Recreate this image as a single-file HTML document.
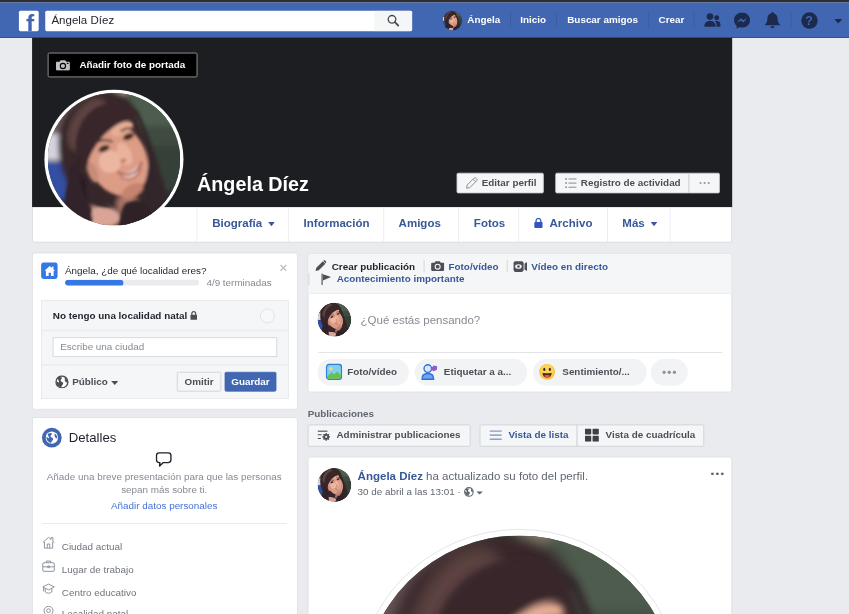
<!DOCTYPE html>
<html lang="es">
<head>
<meta charset="utf-8">
<title>Ángela Díez</title>
<style>
html,body{margin:0;padding:0;width:849px;height:614px;overflow:hidden;background:#e9ebee;}
body{font-family:"Liberation Sans",Arial,Helvetica,sans-serif;font-size:12px;color:#1d2129;line-height:16px;}
#page{position:absolute;left:0;top:0;width:1032px;height:747px;overflow:hidden;background:#e9ebee;transform:scale(0.82267);transform-origin:0 0;}
#page *{box-sizing:border-box;}
.abs{position:absolute;}
.b{font-weight:bold;}
svg{display:block;}
/* top bars */
#chrome{left:0;top:0;width:1032px;height:3.3px;background:#2d2e31;}
#bluebar{left:0;top:3.3px;width:1032px;height:43px;background:#4267b2;border-bottom:1px solid #29487d;}
#logo{left:22.5px;top:10px;width:24px;height:24.5px;background:#fff;border-radius:2px;overflow:hidden;}
#search{left:54.5px;top:10px;width:446px;height:24.5px;background:#fff;border-radius:2px;overflow:hidden;}
#search .q{left:8px;top:0;line-height:23px;font-size:14px;color:#1d2129;}
#search .btn{right:0;top:0;width:46px;height:25px;background:#f5f6f7;}
.navt{top:0;height:42px;line-height:43px;color:#fff;font-weight:bold;font-size:12px;white-space:nowrap;}
.nsep{top:12px;width:1px;height:18px;background:#3a5a9e;}
/* cover */
#cover{left:39px;top:46.3px;width:851px;height:205.7px;background:#1c1e21;}
#addcover{left:19px;top:18px;width:181.5px;height:29.5px;border:1px solid #a8a9ab;background:#000;border-radius:2px;color:#fff;font-weight:bold;font-size:12px;line-height:27.5px;}
#pp{left:15px;top:62.5px;width:169px;height:169px;border-radius:50%;background:#fff;z-index:5;}
#pp svg{position:absolute;left:4px;top:4px;}
#name{left:200.5px;top:163px;font-size:24px;line-height:30px;font-weight:bold;color:#fff;white-space:nowrap;}
.cbtn{height:25px;background:#f5f6f7;border:1px solid #ccd0d5;border-radius:2px;color:#4b4f56;font-weight:bold;font-size:12px;line-height:23px;white-space:nowrap;}
/* tabs */
#tabs{left:39px;top:252px;width:851px;height:43px;background:#fff;border:1px solid #d3d6db;border-top:0;border-radius:0 0 3px 3px;}
.tab{top:0;height:42px;border-left:1px solid #e9eaed;color:#385898;font-size:14px;font-weight:bold;line-height:39px;padding-left:18px;white-space:nowrap;}
/* cards */
.card{background:#fff;border:1px solid #dddfe2;border-radius:3px;}
.grey{color:#858a93;}
.pill{top:436.4px;height:32.5px;border-radius:17px;background:#f2f3f5;color:#4b4f56;font-weight:bold;font-size:12px;line-height:32.5px;white-space:nowrap;}
.pill span{position:absolute;left:36px;top:0;}
.pill svg{position:absolute;left:9.5px;top:6px;}
.hl{font-weight:bold;font-size:12px;white-space:nowrap;line-height:16px;}
.drow{left:76px;color:#6f747c;font-size:12px;line-height:16px;white-space:nowrap;}
</style>
</head>
<body>
<svg width="0" height="0" style="position:absolute">
<defs>
<filter id="bl" x="-20%" y="-20%" width="140%" height="140%"><feGaussianBlur stdDeviation="2.2"/></filter>
<filter id="bl2" x="-20%" y="-20%" width="140%" height="140%"><feGaussianBlur stdDeviation="1.2"/></filter>
<clipPath id="cc"><circle cx="50" cy="50" r="50"/></clipPath>
<symbol id="photo" viewBox="0 0 100 100">
<g clip-path="url(#cc)">
<rect width="100" height="100" fill="#3f4b40"/>
<g filter="url(#bl)">
<!-- background -->
<rect x="55" y="-5" width="55" height="30" fill="#4e5b4d"/>
<rect x="72" y="40" width="40" height="38" fill="#363f37"/>
<rect x="70" y="74" width="40" height="36" fill="#2a2c34"/>
<rect x="50" y="-4" width="9" height="10" fill="#9a917f"/>
<rect x="-5" y="-5" width="40" height="40" fill="#6b5658"/>
<rect x="-6" y="31" width="16" height="20" fill="#d6d3de"/>
<rect x="-5" y="52" width="24" height="32" fill="#3350a4"/>
<rect x="-5" y="80" width="30" height="25" fill="#25336c"/>
<!-- hair mass -->
<path d="M8 38 C8 14 26 -3 48 -1 C60 0 66 8 69 20 C74 34 82 48 86 64 C90 84 82 98 66 104 L22 104 C24 92 14 82 16 70 C10 60 8 50 8 38Z" fill="#38282a"/>
<ellipse cx="30" cy="24" rx="12" ry="22" fill="#5c4341" transform="rotate(30 30 24)"/>
<ellipse cx="24" cy="70" rx="6" ry="16" fill="#291d20" transform="rotate(-8 24 70)"/>
<!-- shoulder / neck -->
<ellipse cx="38" cy="94" rx="17" ry="8" fill="#dba698"/>
<ellipse cx="60" cy="84" rx="8" ry="8" fill="#a87366"/>
</g>
<g filter="url(#bl2)">
<!-- face -->
<ellipse cx="52.500" cy="50" rx="22" ry="29" fill="#dc9c86" transform="rotate(-25 52.500 50)"/>
<ellipse cx="47" cy="52" rx="8.500" ry="8.500" fill="#ecb7a0"/>
<ellipse cx="58" cy="46" rx="5" ry="9" fill="#eab29b" transform="rotate(-25 58 46)"/>
<ellipse cx="56" cy="27" rx="9" ry="4.500" fill="#e6ad95" transform="rotate(-25 56 27)"/>
<ellipse cx="64" cy="74" rx="9" ry="5" fill="#c5836f" transform="rotate(-30 64 74)"/>
<ellipse cx="34" cy="60" rx="3.500" ry="8" fill="#c88b78" transform="rotate(-20 34 60)"/>
<!-- hair right of face -->
<path d="M60 9 C68 16 72 28 75 40 C77 52 76 62 72 72 C70 80 74 88 70 96 L90 96 C92 84 88 70 84 60 C80 46 76 30 68 14Z" fill="#33252a"/>
<path d="M58 84 C64 80 72 80 76 86 C80 92 78 100 70 104 L52 104 C56 98 54 90 58 84Z" fill="#2e2126"/>
<!-- fringe -->
<path d="M66 17 C62 4 34 2 24 26 C18 42 22 58 28 66 C29 56 31 48 35 42 C40 33 47 27 54 23 C58 21 63 19 66 17Z" fill="#38282a"/>
<!-- hair left falling -->
<path d="M27 44 C22 58 24 72 30 82 C34 88 35 92 33 100 L14 100 C10 84 14 62 27 44Z" fill="#30232a"/>
<ellipse cx="43" cy="93" rx="10" ry="5.500" fill="#d9a496" transform="rotate(12 43 93)"/>
<path d="M30 64 C32 74 40 82 50 86 C44 88 36 86 32 80 C29 75 29 70 30 64Z" fill="#35262a"/>
<!-- brows, eyes, mouth -->
<path d="M36 38 C40 35 45 35 49 37" stroke="#4a302b" stroke-width="1.500" fill="none"/>
<path d="M55 29 C59 26 63 26 67 28" stroke="#4a302b" stroke-width="1.500" fill="none"/>
<ellipse cx="42.500" cy="42" rx="4.400" ry="2.300" fill="#3a2521" transform="rotate(-22 42.500 42)"/>
<ellipse cx="61" cy="33" rx="4.400" ry="2.300" fill="#3a2521" transform="rotate(-22 61 33)"/>
<path d="M54 60.500 C60 62 67 58 70 52.500 C70 62 61 68 54 60.500Z" fill="#f6e8e2"/>
<path d="M52.500 59.500 C60 64.500 68 61 71 52" stroke="#a5524c" stroke-width="1.600" fill="none"/>
<path d="M55 63 C61 68 68 64 70.500 57" stroke="#b96a60" stroke-width="1.400" fill="none"/>
<ellipse cx="57" cy="51" rx="2.500" ry="1.200" fill="#b97662" transform="rotate(-22 57 51)"/>
</g>
</g>
</symbol>
</defs>
</svg>
<div id="page">
<div id="chrome" class="abs"></div>
<div id="bluebar" class="abs">
  <div id="logo" class="abs"><div class="abs b" style="left:9px;top:1px;font-size:30px;line-height:30px;color:#4267b2;">f</div></div>
  <div id="search" class="abs">
    <div class="q abs">Ángela Díez</div>
    <div class="btn abs"><svg class="abs" style="left:15px;top:3.5px" width="16" height="16" viewBox="0 0 16 16"><circle cx="6.5" cy="6.5" r="4.6" fill="none" stroke="#4b4f56" stroke-width="1.7"/><path d="M10 10 L14 14" stroke="#4b4f56" stroke-width="2.2" stroke-linecap="round"/></svg></div>
  </div>
  <svg class="abs" style="left:538px;top:10px;border-radius:50%" width="24" height="24"><use href="#photo" width="24" height="24"/></svg>
  <div class="navt abs" style="left:568px;">Ángela</div>
  <div class="nsep abs" style="left:620px;"></div>
  <div class="navt abs" style="left:632.5px;">Inicio</div>
  <div class="nsep abs" style="left:676px;"></div>
  <div class="navt abs" style="left:689.5px;">Buscar amigos</div>
  <div class="nsep abs" style="left:788px;"></div>
  <div class="navt abs" style="left:800.5px;">Crear</div>
  <div class="nsep abs" style="left:843px;"></div>
  <!-- friends -->
  <svg class="abs" style="left:855.5px;top:11.5px" width="20" height="20" viewBox="0 0 20 20" fill="#1c2a4d"><circle cx="7" cy="5.2" r="4"/><path d="M0 17.5 C0 12.5 3 10.5 7 10.5 C11 10.5 14 12.5 14 17.5 Z"/><circle cx="15.2" cy="6.5" r="3"/><path d="M13 10.6 C14 10.3 17.5 10 19 12 C20 13.5 20 15.5 20 17.5 L15.3 17.5 C15.3 14.5 14.6 12.3 13 10.6Z"/></svg>
  <!-- messenger -->
  <svg class="abs" style="left:892px;top:11.5px" width="20" height="20" viewBox="0 0 20 20"><path d="M10 0.3 C4.5 0.3 0.3 4.3 0.3 9.5 C0.3 12.3 1.5 14.7 3.4 16.3 L3.4 19.8 L6.7 18 C7.7 18.3 8.8 18.5 10 18.5 C15.5 18.5 19.7 14.6 19.7 9.5 C19.7 4.3 15.5 0.3 10 0.3Z" fill="#1c2a4d"/><path d="M3.8 12.3 L8.6 7.2 L11.2 9.7 L16.2 7.2 L11.4 12.3 L8.8 9.8Z" fill="#4267b2"/></svg>
  <!-- bell -->
  <svg class="abs" style="left:928.5px;top:11px" width="20" height="21" viewBox="0 0 20 21" fill="#1c2a4d"><path d="M10 0.5 C10.9 0.5 11.5 1.1 11.5 2 C14.6 2.8 16.2 5.4 16.2 8.6 C16.2 12.2 17 14 19 15.6 L19 16.6 L1 16.6 L1 15.6 C3 14 3.8 12.2 3.8 8.6 C3.8 5.4 5.4 2.8 8.5 2 C8.5 1.1 9.1 0.5 10 0.5Z"/><path d="M7.6 18 L12.4 18 C12.4 19.4 11.3 20.3 10 20.3 C8.7 20.3 7.6 19.4 7.6 18Z"/></svg>
  <div class="nsep abs" style="left:960.5px;"></div>
  <!-- help -->
  <div class="abs b" style="left:973.5px;top:11.5px;width:20px;height:20px;border-radius:50%;background:#1c2a4d;color:#4267b2;font-size:15px;line-height:20.5px;text-align:center;">?</div>
  <!-- caret -->
  <svg class="abs" style="left:1014px;top:19.5px" width="10" height="6" viewBox="0 0 10 6"><path d="M0 0 L10 0 L5 5.5Z" fill="#1c2a4d"/></svg>
</div>

<div id="cover" class="abs">
  <div id="addcover" class="abs">
    <svg class="abs" style="left:8.5px;top:7.5px" width="17" height="13" viewBox="0 0 17 13"><path d="M1.5 2 L4.5 2 L5.6 0.3 L11.4 0.3 L12.5 2 L15.5 2 C16.3 2 17 2.7 17 3.5 L17 11.3 C17 12.1 16.3 12.8 15.5 12.8 L1.5 12.8 C0.7 12.8 0 12.1 0 11.3 L0 3.5 C0 2.7 0.7 2 1.5 2Z" fill="#bfc0c1"/><circle cx="8.5" cy="7.2" r="3.9" fill="#000"/><circle cx="8.5" cy="7.2" r="2.5" fill="#bfc0c1"/><rect x="13.3" y="3.4" width="2" height="1.4" fill="#000"/></svg>
    <div class="abs" style="left:37.5px;top:1.2px;white-space:nowrap;">Añadir foto de portada</div>
  </div>
  <div id="pp" class="abs"><svg width="161" height="161"><use href="#photo" width="161" height="161"/></svg></div>
  <div id="name" class="abs">Ángela Díez</div>
  <div class="cbtn abs" style="left:516px;top:163.7px;width:106px;">
    <svg class="abs" style="left:9.5px;top:4px" width="15" height="15" viewBox="0 0 15 15"><path d="M10.2 1.6 C10.9 0.9 12 0.9 12.7 1.6 L13.4 2.3 C14.1 3 14.1 4.1 13.4 4.8 L5 13.2 L1.2 13.8 L1.8 10 Z M9 2.8 L12.2 6" fill="none" stroke="#7f848c" stroke-width="1.1" stroke-linejoin="round"/></svg>
    <div class="abs" style="left:29.5px;top:0;">Editar perfil</div>
  </div>
  <div class="cbtn abs" style="left:636px;top:163.7px;width:163px;border-radius:2px 0 0 2px;">
    <svg class="abs" style="left:10.5px;top:5px" width="14" height="13" viewBox="0 0 14 13"><g fill="#7f848c"><rect x="0" y="0.5" width="2" height="2"/><rect x="0" y="5.5" width="2" height="2"/><rect x="0" y="10.5" width="2" height="2"/><rect x="4" y="1" width="10" height="1.1"/><rect x="4" y="6" width="10" height="1.1"/><rect x="4" y="11" width="10" height="1.1"/></g></svg>
    <div class="abs" style="left:30px;top:0;">Registro de actividad</div>
  </div>
  <div class="cbtn abs" style="left:798px;top:163.7px;width:37.5px;border-radius:0 2px 2px 0;">
    <svg class="abs" style="left:11.5px;top:10px" width="13" height="3" viewBox="0 0 13 3"><g fill="#8d949e"><circle cx="1.5" cy="1.5" r="1.3"/><circle cx="6.5" cy="1.5" r="1.3"/><circle cx="11.5" cy="1.5" r="1.3"/></g></svg>
  </div>
</div>
<div id="tabs" class="abs">
  <div class="tab abs" style="left:199px;width:111.5px;">Biografía <svg style="display:inline-block;margin-left:3px;vertical-align:1px" width="8" height="5" viewBox="0 0 8 5"><path d="M0 0 L8 0 L4 5Z" fill="#385898"/></svg></div>
  <div class="tab abs" style="left:310px;width:116px;">Información</div>
  <div class="tab abs" style="left:425.5px;width:91.5px;">Amigos</div>
  <div class="tab abs" style="left:517px;width:73px;">Fotos</div>
  <div class="tab abs" style="left:590px;width:107.5px;"><svg style="display:inline-block;margin-right:8px;vertical-align:-1px" width="11" height="12" viewBox="0 0 11 12"><path d="M2.6 5 L2.6 3.4 C2.6 1.6 3.9 0.6 5.5 0.6 C7.1 0.6 8.4 1.6 8.4 3.4 L8.4 5" fill="none" stroke="#2f56c0" stroke-width="1.5"/><rect x="0.5" y="5" width="10" height="7" rx="1" fill="#2f56c0"/></svg>Archivo</div>
  <div class="tab abs" style="left:697.5px;width:76.5px;">Más <svg style="display:inline-block;margin-left:3px;vertical-align:1px" width="8" height="5" viewBox="0 0 8 5"><path d="M0 0 L8 0 L4 5Z" fill="#385898"/></svg></div>
  <div class="tab abs" style="left:774px;width:10px;padding:0;"></div>
</div>

<div class="card abs" style="left:38.5px;top:306.5px;width:323.5px;height:191px;"><div class="abs" style="left:0.4px;top:0;">
  <div class="abs" style="left:10.5px;top:11.5px;width:20px;height:20px;border-radius:3px;background:#3578e5;">
    <svg class="abs" style="left:3.5px;top:3.5px" width="13" height="13" viewBox="0 0 13 13"><path d="M6.5 0.3 L13 6.2 L11.2 6.2 L11.2 12.6 L7.9 12.6 L7.9 8.6 L5.1 8.6 L5.1 12.6 L1.8 12.6 L1.8 6.2 L0 6.2 Z" fill="#fff"/><rect x="9.3" y="1" width="1.7" height="3" fill="#fff"/></svg>
  </div>
  <div class="abs" style="left:39px;top:13px;white-space:nowrap;">Ángela, ¿de qué localidad eres?</div>
  <div class="abs" style="left:39px;top:32px;width:163px;height:7.5px;border-radius:4px;background:#e9ebee;overflow:hidden;"><div style="width:71px;height:8px;background:#3578e5;border-radius:4px;"></div></div>
  <div class="abs grey" style="left:211px;top:28.5px;white-space:nowrap;">4/9 terminadas</div>
  <svg class="abs" style="left:300px;top:13.5px" width="9" height="9" viewBox="0 0 9 9"><path d="M1 1 L8 8 M8 1 L1 8" stroke="#bec3c9" stroke-width="1.8"/></svg>
  <div class="abs" style="left:10.3px;top:57px;width:300.5px;height:120.5px;background:#f5f6f7;border:1px solid #e5e6e9;">
    <div class="abs b" style="left:13px;top:10px;white-space:nowrap;">No tengo una localidad natal</div>
    <svg class="abs" style="left:179.5px;top:12.5px" width="9" height="11" viewBox="0 0 9 11"><path d="M2.2 5 L2.2 3.2 C2.2 1.6 3.2 0.8 4.5 0.8 C5.8 0.8 6.8 1.6 6.8 3.2 L6.8 5" fill="none" stroke="#4b4f56" stroke-width="1.4"/><rect x="0.5" y="4.6" width="8" height="6.2" rx="0.8" fill="#4b4f56"/></svg>
    <div class="abs" style="left:265px;top:9.5px;width:18px;height:18px;border-radius:50%;border:1px solid #dddfe2;background:#f7f8fa;"></div>
    <div class="abs" style="left:0;top:35.5px;width:299px;height:1px;background:#e5e6e9;"></div>
    <div class="abs" style="left:12.5px;top:44.5px;width:273px;height:24px;background:#fff;border:1px solid #ccd0d5;"><div class="abs grey" style="left:8.5px;top:3px;white-space:nowrap;">Escribe una ciudad</div></div>
    <div class="abs" style="left:0;top:77px;width:299px;height:1px;background:#e5e6e9;"></div>
    <svg class="abs" style="left:16px;top:90px" width="16.5" height="16.5" viewBox="0 0 16 16"><circle cx="8" cy="8" r="7" fill="#fff" stroke="#4b4f56" stroke-width="1.6"/><path d="M3 3.5 C5 2 7.5 2 8 3 C8.5 4.5 6 5 6.5 6.5 C7 8 9 7.5 9.5 9 C10 10.5 8 12 7 14.5 C3 13.5 1 10 1.5 7 C2.5 7.5 3.5 9 4.5 8.5 C5.5 7.5 3 6 3 3.5Z M11 2.5 C13.5 4 15 6.5 14.5 9 C13.5 8.5 12 8 11.5 6.5 C11 5 12 4 11 2.5Z" fill="#4b4f56"/></svg>
    <div class="abs b" style="left:36.5px;top:90.5px;color:#4b4f56;white-space:nowrap;">Público</div>
    <svg class="abs" style="left:83.5px;top:97px" width="9" height="5" viewBox="0 0 9 5"><path d="M0 0 L9 0 L4.5 5Z" fill="#4b4f56"/></svg>
    <div class="cbtn abs" style="left:164px;top:86px;width:53.5px;height:24px;line-height:22px;text-align:center;">Omitir</div>
    <div class="cbtn abs" style="left:221.5px;top:86px;width:63.5px;height:24px;line-height:22px;text-align:center;background:#4267b2;border-color:#4267b2;color:#fff;">Guardar</div>
  </div>
</div></div>
<div class="card abs" style="left:38.5px;top:506.5px;width:323.5px;height:260px;"><div class="abs" style="left:-0.4px;top:0;">
  <div class="abs" style="left:11.5px;top:12.5px;width:24px;height:24px;border-radius:50%;background:#4267b2;">
    <svg class="abs" style="left:4px;top:4px" width="16" height="16" viewBox="0 0 16 16"><circle cx="8" cy="8" r="7.5" fill="#fff"/><path d="M3 3.5 C5 2 7.5 2 8 3 C8.5 4.5 6 5 6.5 6.5 C7 8 9 7.5 9.5 9 C10 10.5 8 12 7 14.5 C3 13.5 1 10 1.5 7 C2.5 7.5 3.5 9 4.5 8.5 C5.5 7.5 3 6 3 3.5Z M11 2.5 C13.5 4 15 6.5 14.5 9 C13.5 8.5 12 8 11.5 6.5 C11 5 12 4 11 2.5Z" fill="#4267b2"/></svg>
  </div>
  <div class="abs" style="left:44.5px;top:14px;font-size:16px;line-height:20px;white-space:nowrap;">Detalles</div>
  <svg class="abs" style="left:149.5px;top:41.5px" width="20" height="20" viewBox="0 0 20 20"><path d="M4.5 1.5 L15.5 1.5 C17.5 1.5 18.8 2.8 18.8 4.8 L18.8 10 C18.8 12 17.5 13.3 15.5 13.3 L9.5 13.3 L5 17.5 L5.4 13.3 L4.5 13.3 C2.5 13.3 1.2 12 1.2 10 L1.2 4.8 C1.2 2.8 2.5 1.5 4.5 1.5Z" fill="#fff" stroke="#1d2129" stroke-width="1.7" stroke-linejoin="round"/></svg>
  <div class="abs grey" style="left:0;top:64.5px;width:321px;text-align:center;line-height:15.5px;">Añade una breve presentación para que las personas<br>sepan más sobre ti.</div>
  <div class="abs" style="left:0;top:99.5px;width:321px;text-align:center;color:#4472d6;">Añadir datos personales</div>
  <div class="abs" style="left:11.5px;top:128px;width:298px;height:1px;background:#e5e6e9;"></div>
  <!-- rows -->
  <svg class="abs" style="left:11.5px;top:144.5px" width="16" height="16" viewBox="0 0 16 16"><path d="M1 7.5 L8 1.2 L11 3.9 L11 1.5 L13.3 1.5 L13.3 6 L15 7.5 M3 6.5 L3 14.3 L13 14.3 L13 6.5 M6.5 14 L6.5 9.3 L9.5 9.3 L9.5 14" fill="none" stroke="#8d949e" stroke-width="1.2" stroke-linejoin="round"/></svg>
  <div class="drow abs" style="left:36px;top:149px;">Ciudad actual</div>
  <svg class="abs" style="left:11.5px;top:172.5px" width="16" height="16" viewBox="0 0 16 16"><rect x="1" y="4" width="14" height="10.5" rx="1.5" fill="none" stroke="#8d949e" stroke-width="1.2"/><path d="M5.5 4 L5.5 2 L10.5 2 L10.5 4 M1 9 L15 9 M7 8 L9 8 L9 10 L7 10Z" fill="none" stroke="#8d949e" stroke-width="1.2"/></svg>
  <div class="drow abs" style="left:36px;top:177.5px;">Lugar de trabajo</div>
  <svg class="abs" style="left:11.5px;top:200.5px" width="16" height="16" viewBox="0 0 16 16"><path d="M1 5.5 L8 2 L15 5.5 L8 9 Z M4 7.2 L4 11.5 C6 13.5 10 13.5 12 11.5 L12 7.2 M2 6 L2 11" fill="none" stroke="#8d949e" stroke-width="1.2" stroke-linejoin="round"/></svg>
  <div class="drow abs" style="left:36px;top:205px;">Centro educativo</div>
  <svg class="abs" style="left:11.5px;top:228px" width="16" height="16" viewBox="0 0 16 16"><path d="M8 15 C4 10.5 2.5 8.5 2.5 6.3 C2.5 3.2 5 1 8 1 C11 1 13.5 3.2 13.5 6.3 C13.5 8.5 12 10.5 8 15Z" fill="none" stroke="#8d949e" stroke-width="1.2"/><circle cx="8" cy="6.3" r="2.3" fill="none" stroke="#8d949e" stroke-width="1.2"/></svg>
  <div class="drow abs" style="left:36px;top:230.5px;">Localidad natal</div>
</div></div>

<div class="card abs" style="left:373.5px;top:307.7px;width:516px;height:169.8px;">
  <div class="abs" style="left:0;top:0;width:514px;height:48px;background:#f5f6f7;border-bottom:1px solid #dddfe2;border-radius:2px 2px 0 0;"></div><div class="abs" style="left:-0.8px;top:0;">
  <!-- line 1 -->
  <svg class="abs" style="left:9.5px;top:7.8px" width="14" height="14" viewBox="0 0 14 14"><path d="M0.5 13.5 L1.5 9.5 L9.5 1.5 L12.5 4.5 L4.5 12.5 Z" fill="#4b4f56"/><path d="M10.3 0.8 C10.9 0.2 11.8 0.2 12.3 0.8 L13.2 1.7 C13.8 2.3 13.8 3.1 13.2 3.7 L12.9 4 L10 1.1Z" fill="#4b4f56"/></svg>
  <div class="hl abs" style="left:29.5px;top:6.9px;color:#1d2129;">Crear publicación</div>
  <div class="abs" style="left:141px;top:7.8px;width:1px;height:15px;background:#ccd0d5;"></div>
  <svg class="abs" style="left:150px;top:8.8px" width="16" height="13" viewBox="0 0 17 13"><path d="M1.5 2 L4.5 2 L5.6 0.3 L11.4 0.3 L12.5 2 L15.5 2 C16.3 2 17 2.7 17 3.5 L17 11.3 C17 12.1 16.3 12.8 15.5 12.8 L1.5 12.8 C0.7 12.8 0 12.1 0 11.3 L0 3.5 C0 2.7 0.7 2 1.5 2Z" fill="#4b4f56"/><circle cx="8.5" cy="7.2" r="3.9" fill="#f5f6f7"/><circle cx="8.5" cy="7.2" r="2.5" fill="#4b4f56"/></svg>
  <div class="hl abs" style="left:171.5px;top:6.9px;color:#365899;">Foto/vídeo</div>
  <div class="abs" style="left:242px;top:7.8px;width:1px;height:15px;background:#ccd0d5;"></div>
  <svg class="abs" style="left:250.5px;top:8.3px" width="17" height="14" viewBox="0 0 17 14"><rect x="0" y="0.5" width="12.5" height="13" rx="2.5" fill="#4b4f56"/><path d="M13.6 3.5 L16.6 1.5 L16.6 12.5 L13.6 10.5Z" fill="#4b4f56"/><ellipse cx="6.2" cy="7" rx="4" ry="2.8" fill="#f5f6f7"/><circle cx="6.2" cy="7" r="1.6" fill="#4b4f56"/></svg>
  <div class="hl abs" style="left:272px;top:6.9px;color:#365899;">Vídeo en directo</div>
  <!-- line 2 -->
  <div class="abs" style="left:1px;top:23.5px;width:1px;height:15px;background:#ccd0d5;"></div>
  <svg class="abs" style="left:16px;top:23.5px" width="13" height="15" viewBox="0 0 13 15"><path d="M1.5 0.5 L1.5 14.5" stroke="#4b4f56" stroke-width="1.4"/><path d="M2.5 1.5 L12.5 4.8 L2.5 9Z" fill="#4b4f56"/></svg>
  <div class="hl abs" style="left:35.5px;top:22.6px;color:#365899;">Acontecimiento importante</div>
  <!-- composer -->
  <svg class="abs" style="left:12px;top:59.5px;border-radius:50%" width="41" height="41"><use href="#photo" width="41" height="41"/></svg>
  <div class="abs grey" style="left:64.5px;top:71.4px;font-size:14px;line-height:18px;white-space:nowrap;">¿Qué estás pensando?</div>
  <div class="abs" style="left:12.8px;top:119.5px;width:491px;height:1px;background:#dddfe2;"></div>
</div></div>
<div class="pill abs" style="left:386px;width:111px;">
  <svg width="20" height="20" viewBox="0 0 20 20"><rect x="0.8" y="0.8" width="18.4" height="18.4" rx="3.5" fill="#7fd0f0" stroke="#2f7fd6" stroke-width="1.6"/><circle cx="6.3" cy="6.3" r="2.2" fill="#fbd968"/><path d="M1.6 16 L7 10.5 L10 13.3 L14 9.5 L18.4 14 L18.4 16.5 C18.4 17.6 17.6 18.4 16.5 18.4 L3.5 18.4 C2.4 18.4 1.6 17.6 1.6 16.5Z" fill="#6cc04a"/></svg>
  <span>Foto/vídeo</span>
</div>
<div class="pill abs" style="left:503.5px;width:137.5px;">
  <svg style="left:8px" width="20" height="20" viewBox="0 0 20 20"><circle cx="8" cy="6" r="4.6" fill="#dbe7fb" stroke="#2f6fd6" stroke-width="1.6"/><path d="M0.8 19 C0.8 14 3.5 12 8 12 C12.5 12 15.2 14 15.2 19Z" fill="#6ea4f5" stroke="#2f6fd6" stroke-width="1.6" stroke-linejoin="round"/><path d="M11.5 6.2 L15 2.2 L19.5 3.2 L19 7.8 L14.5 9.2Z" fill="#8a5fd0"/></svg>
  <span>Etiquetar a a...</span>
</div>
<div class="pill abs" style="left:647.5px;width:138px;">
  <svg style="left:7.5px" width="20" height="20" viewBox="0 0 20 20"><circle cx="10" cy="10" r="9.6" fill="#f7c23c"/><circle cx="10" cy="9" r="8" fill="#fbd55a"/><ellipse cx="6.6" cy="7" rx="1.3" ry="1.9" fill="#3b2a1a"/><ellipse cx="13.4" cy="7" rx="1.3" ry="1.9" fill="#3b2a1a"/><path d="M4.3 11 C6 11.8 14 11.8 15.7 11 C15.5 15 13 17 10 17 C7 17 4.5 15 4.3 11Z" fill="#5a2b1a"/><path d="M6.5 14.8 C8 13.6 12 13.6 13.5 14.8 C12.5 16.4 11.3 17 10 17 C8.7 17 7.5 16.4 6.5 14.8Z" fill="#f0506e"/></svg>
  <span>Sentimiento/...</span>
</div>
<div class="pill abs" style="left:791px;width:45px;">
  <svg style="left:14px;top:14px" width="17" height="5" viewBox="0 0 17 5"><g fill="#8d949e"><circle cx="2.2" cy="2.5" r="2"/><circle cx="8.5" cy="2.5" r="2"/><circle cx="14.8" cy="2.5" r="2"/></g></svg>
</div>
<div class="abs b" style="left:374px;top:495px;color:#606770;white-space:nowrap;">Publicaciones</div>
<div class="cbtn abs" style="left:373.5px;top:515.5px;width:198px;height:27px;line-height:25.6px;">
  <svg class="abs" style="left:11px;top:6.5px" width="16" height="13" viewBox="0 0 16 13"><g stroke="#4b4f56" stroke-width="1.4"><path d="M0 1 L12 1 M0 5.5 L5 5.5 M0 10 L4 10"/></g><circle cx="10.5" cy="8" r="3.6" fill="#4b4f56"/><circle cx="10.5" cy="8" r="1.3" fill="#f5f6f7"/><g stroke="#4b4f56" stroke-width="1.6"><path d="M10.5 3.3 L10.5 12.7 M5.8 8 L15.2 8 M7.2 4.7 L13.8 11.3 M13.8 4.7 L7.2 11.3"/></g><circle cx="10.5" cy="8" r="1.3" fill="#f5f6f7"/></svg>
  <div class="abs" style="left:34.5px;top:0;">Administrar publicaciones</div>
</div>
<div class="cbtn abs" style="left:582.5px;top:515.5px;width:119px;height:27px;line-height:25px;border-radius:2px 0 0 2px;color:#385898;">
  <svg class="abs" style="left:11px;top:6.5px" width="15" height="12" viewBox="0 0 15 12"><g fill="#8b9dc3"><rect x="0" y="0" width="15" height="1.8"/><rect x="0" y="5" width="15" height="1.8"/><rect x="0" y="10" width="15" height="1.8"/></g></svg>
  <div class="abs" style="left:34.5px;top:0;">Vista de lista</div>
</div>
<div class="cbtn abs" style="left:700.5px;top:515.5px;width:155px;height:27px;line-height:25px;border-radius:0 2px 2px 0;">
  <svg class="abs" style="left:9.5px;top:4.5px" width="17" height="16" viewBox="0 0 17 16"><g fill="#3c4047"><rect x="0" y="0" width="7.7" height="7.2" rx="1"/><rect x="9.3" y="0" width="7.7" height="7.2" rx="1"/><rect x="0" y="8.8" width="7.7" height="7.2" rx="1"/><rect x="9.3" y="8.8" width="7.7" height="7.2" rx="1"/></g></svg>
  <div class="abs" style="left:34.5px;top:0;">Vista de cuadrícula</div>
</div>
<div class="card abs" style="left:373.5px;top:555.3px;width:516px;height:300px;overflow:hidden;"><div class="abs" style="left:-0.8px;top:0;">
  <svg class="abs" style="left:12px;top:12.5px;border-radius:50%" width="41" height="41"><use href="#photo" width="41" height="41"/></svg>
  <div class="abs" style="left:61px;top:14px;font-size:14px;line-height:18px;color:#616770;white-space:nowrap;"><span class="b" style="color:#385898;">Ángela Díez</span> ha actualizado su foto del perfil.</div>
  <div class="abs" style="left:61px;top:33.5px;color:#616770;white-space:nowrap;">30 de abril a las 13:01 · </div>
  <svg class="abs" style="left:190.5px;top:36px" width="12" height="12" viewBox="0 0 16 16"><circle cx="8" cy="8" r="7" fill="#fff" stroke="#616770" stroke-width="1.8"/><path d="M3 3.5 C5 2 7.5 2 8 3 C8.5 4.5 6 5 6.5 6.5 C7 8 9 7.5 9.5 9 C10 10.5 8 12 7 14.5 C3 13.5 1 10 1.5 7 C2.5 7.5 3.5 9 4.5 8.5 C5.5 7.5 3 6 3 3.5Z M11 2.5 C13.5 4 15 6.5 14.5 9 C13.5 8.5 12 8 11.5 6.5 C11 5 12 4 11 2.5Z" fill="#616770"/></svg>
  <svg class="abs" style="left:205.5px;top:40.5px" width="8" height="4.5" viewBox="0 0 8 4.5"><path d="M0 0 L8 0 L4 4.5Z" fill="#616770"/></svg>
  <svg class="abs" style="left:490px;top:17.5px" width="16" height="4" viewBox="0 0 16 4"><g fill="#616770"><circle cx="2" cy="2" r="1.8"/><circle cx="8" cy="2" r="1.8"/><circle cx="14" cy="2" r="1.8"/></g></svg>
  <div class="abs" style="left:59.5px;top:87px;width:396px;height:396px;border-radius:50%;border:1px solid #dddfe2;background:#fff;">
    <svg class="abs" style="left:7px;top:7px" width="380" height="380"><use href="#photo" width="380" height="380"/></svg>
  </div>
</div></div>

</div>
</body>
</html>
